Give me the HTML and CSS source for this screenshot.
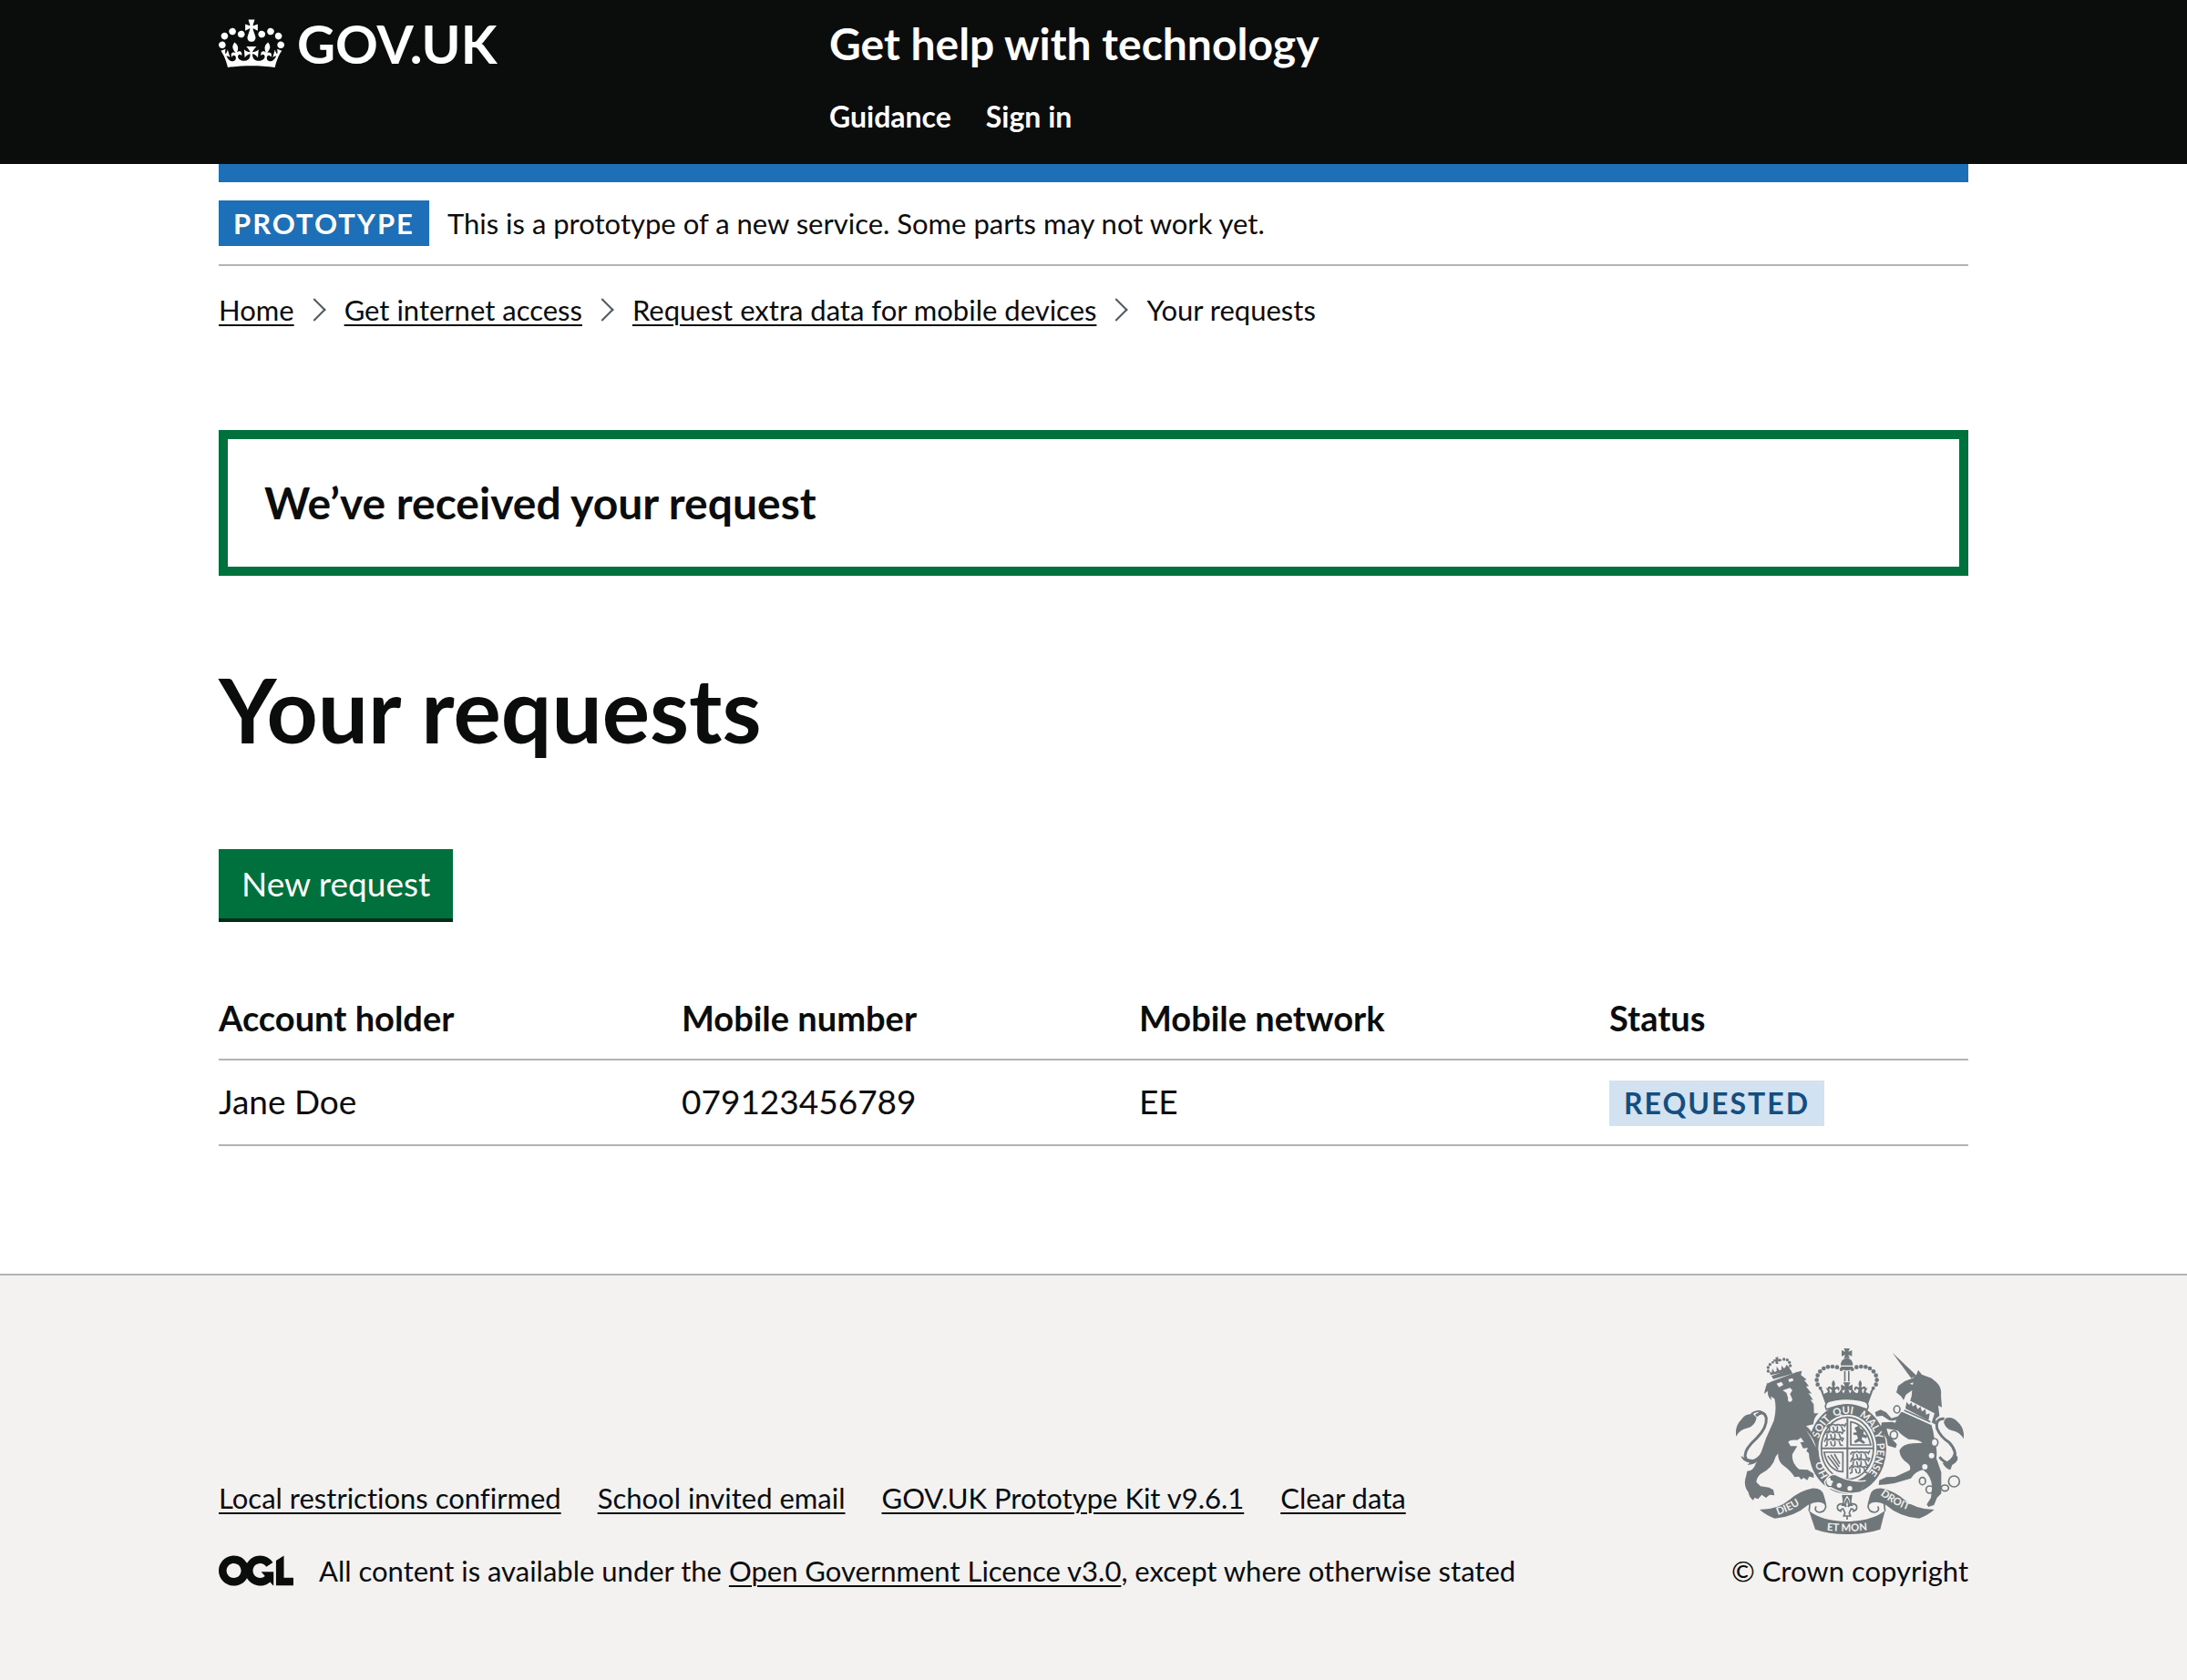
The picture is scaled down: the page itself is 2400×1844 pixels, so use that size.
FILE: index.html
```html
<!DOCTYPE html>
<html lang="en">
<head>
<meta charset="utf-8">
<title>Your requests - Get help with technology - GOV.UK</title>
<meta name="viewport" content="width=device-width, initial-scale=1">
<link rel="stylesheet" href="styles.css">
</head>
<body>
<header class="header">
  <div class="container header-grid">
    <a class="logo" href="#">
      <svg class="logo-crown" viewBox="0 0 132 97" aria-hidden="true"><path fill="currentColor" fill-rule="evenodd" d="M25 30.2c3.5 1.5 7.7-.2 9.1-3.7 1.5-3.6-.2-7.8-3.9-9.2-3.6-1.4-7.6.3-9.1 3.9-1.4 3.5.3 7.5 3.9 9zM9 39.5c3.6 1.5 7.8-.2 9.2-3.7 1.5-3.6-.2-7.8-3.9-9.1-3.6-1.5-7.6.2-9.1 3.8-1.4 3.5.3 7.5 3.8 9zM4.4 57.2c3.5 1.5 7.7-.2 9.1-3.8 1.5-3.6-.2-7.7-3.9-9.1-3.5-1.5-7.6.3-9.1 3.8-1.4 3.5.3 7.6 3.9 9.1zm38.3-21.4c3.5 1.5 7.7-.2 9.1-3.8 1.5-3.6-.2-7.7-3.9-9.1-3.6-1.5-7.6.3-9.1 3.8-1.3 3.6.4 7.7 3.9 9.1zm64.4-5.6c-3.6 1.5-7.8-.2-9.1-3.7-1.5-3.6.2-7.8 3.8-9.2 3.6-1.4 7.7.3 9.2 3.9 1.3 3.5-.4 7.5-3.9 9zm15.9 9.3c-3.6 1.5-7.7-.2-9.1-3.7-1.5-3.6.2-7.8 3.7-9.1 3.6-1.5 7.7.2 9.2 3.8 1.5 3.5-.3 7.5-3.8 9zm4.7 17.7c-3.6 1.5-7.8-.2-9.2-3.8-1.5-3.6.2-7.7 3.9-9.1 3.6-1.5 7.7.3 9.2 3.8 1.3 3.5-.4 7.6-3.9 9.1zM89.3 35.8c-3.6 1.5-7.8-.2-9.2-3.8-1.4-3.6.2-7.7 3.9-9.1 3.6-1.5 7.7.3 9.2 3.8 1.4 3.6-.3 7.7-3.9 9.1zM69.7 17.7l8.9 4.7V9.3l-8.9 2.8c-.2-.3-.5-.6-.9-.9L72.4 0H59.6l3.5 11.2c-.3.3-.6.5-.9.9l-8.8-2.8v13.1l8.8-4.7c.3.3.6.7.9.9l-5 15.4v.1c-.2.8-.4 1.6-.4 2.4 0 4.1 3.1 7.5 7 8.1h.2c.3 0 .7.1 1 .1.4 0 .7 0 1-.1h.2c4-.6 7.1-4.1 7.1-8.1 0-.8-.1-1.7-.4-2.4V34l-5.1-15.4c.4-.2.7-.6 1-.9zM66 92.8c16.9 0 32.8 1.1 47.1 3.2 4-16.9 8.9-26.7 14-33.5l-9.6-3.4c1 4.9 1.1 7.2 0 10.2-1.5-1.4-3-4.3-4.2-8.7L108.6 76c2.8-2 5-3.2 7.5-3.3-4.4 9.4-10 11.9-13.6 11.2-4.3-.8-6.3-4.6-5.6-7.9 1-4.7 5.7-5.9 8-.5 4.3-8.7-3-11.4-7.6-8.8 7.1-7.2 7.9-13.5 2.1-21.1-8 6.1-8.1 12.3-4.5 20.8-4.7-5.4-12.1-2.5-9.5 6.2 3.4-5.2 7.9-2 7.2 3.1-.6 4.3-6.4 7.8-13.5 7.2-10.3-.9-10.9-8-11.2-13.8 2.5-.5 7.1 1.8 11 7.3L80.2 60c-4.1 4.4-8 5.3-12.3 5.4 1.4-4.4 8-11.6 8-11.6H55.5s6.4 7.2 7.9 11.6c-4.2-.1-8-1-12.3-5.4l1.4 16.4c3.9-5.5 8.5-7.7 10.9-7.3-.3 5.8-.9 12.8-11.1 13.8-7.2.6-12.9-2.9-13.5-7.2-.7-5 3.8-8.3 7.1-3.1 2.7-8.7-4.6-11.6-9.4-6.2 3.7-8.5 3.6-14.7-4.6-20.8-5.8 7.6-5 13.9 2.2 21.1-4.7-2.6-11.9.1-7.7 8.8 2.3-5.5 7.1-4.2 8.1.5.7 3.3-1.3 7.1-5.7 7.9-3.5.7-9-1.8-13.5-11.2 2.5.1 4.7 1.3 7.5 3.3l-4.7-15.4c-1.2 4.4-2.7 7.2-4.3 8.7-1.1-3-.9-5.3 0-10.2l-9.5 3.4c5 6.9 9.9 16.7 14 33.5 14.8-2.1 30.8-3.2 47.7-3.2z"/></svg>
      <span>GOV.UK</span>
    </a>
    <div class="header-content">
      <a class="service-name" href="#">Get help with technology</a>
      <nav class="header-nav" aria-label="Top level navigation">
        <a href="#">Guidance</a>
        <a href="#">Sign in</a>
      </nav>
    </div>
  </div>
</header>

<div class="container">
  <div class="phase-banner">
    <strong class="tag tag-phase">Prototype</strong>
    <span>This is a prototype of a new service. Some parts may not work yet.</span>
  </div>
  <nav aria-label="Breadcrumb">
    <ol class="breadcrumbs">
      <li><a class="link" href="#">Home</a></li>
      <li><a class="link" href="#">Get internet access</a></li>
      <li><a class="link" href="#">Request extra data for mobile devices</a></li>
      <li aria-current="page">Your requests</li>
    </ol>
  </nav>

  <main class="main">
    <div class="alert" role="alert">
      <h2 class="alert-title">We’ve received your request</h2>
    </div>
    <h1 class="heading">Your requests</h1>
    <button class="button" type="button">New request</button>
    <table class="table">
      <thead>
        <tr>
          <th class="col-holder" scope="col">Account holder</th>
          <th class="col-number" scope="col">Mobile number</th>
          <th class="col-network" scope="col">Mobile network</th>
          <th scope="col">Status</th>
        </tr>
      </thead>
      <tbody>
        <tr>
          <td>Jane Doe</td>
          <td>079123456789</td>
          <td>EE</td>
          <td class="cell-status"><strong class="tag tag-blue">Requested</strong></td>
        </tr>
      </tbody>
    </table>
  </main>
</div>

<footer class="footer">
  <div class="container footer-row">
    <div>
      <ul class="footer-links">
        <li><a class="link" href="#">Local restrictions confirmed</a></li>
        <li><a class="link" href="#">School invited email</a></li>
        <li><a class="link" href="#">GOV.UK Prototype Kit v9.6.1</a></li>
        <li><a class="link" href="#">Clear data</a></li>
      </ul>
      <div class="licence">
        <svg class="licence-logo" viewBox="0 0 483.2 195.7" role="img" aria-label="Open Government Licence logo"><path fill="currentColor" d="M421.5 142.8V.1l-50.7 32.3v161.1h112.4v-50.7zm-122.3-9.6A47.12 47.12 0 0 1 221 97.8c0-26 21.1-47.1 47.1-47.1 16.7 0 31.4 8.7 39.7 21.8l42.7-27.2A97.63 97.63 0 0 0 268.1 0c-36.5 0-68.3 20.1-85.1 49.7A98 98 0 0 0 97.8 0C43.9 0 0 43.9 0 97.8s43.9 97.8 97.8 97.8c36.5 0 68.3-20.1 85.1-49.7a97.76 97.76 0 0 0 149.6 25.4l19.4 22.2h3v-87.8h-80l24.3 27.5zM97.8 145c-26 0-47.1-21.1-47.1-47.1s21.1-47.1 47.1-47.1 47.1 21.1 47.1 47.1S123.8 145 97.8 145"/></svg>
        <span>All content is available under the <a class="link" href="#">Open Government Licence v3.0</a>, except where otherwise stated</span>
      </div>
    </div>
    <a class="copyright" href="#">
      <svg class="crest" viewBox="72 60 750 612" aria-hidden="true">
        <defs>
          <path id="motto-hon" d="M376 480Q358 452 353 412"/>
          <path id="motto-ring" d="M341 389A98 114 0 0 1 537 389A98 114 0 0 1 439 503"/>
          <path id="dieu" d="M210 609Q268 590 320 547"/>
          <path id="droit" d="M547 542Q600 584 680 607"/>
          <path id="etmon" d="M346 656Q437 668 530 656"/>
          <g id="fleur"><path d="M0-18q-9 11-3 22l-3 3q-8-8-13 0-3 8 4 11-1-7 5-7l5 6-4 9h18l-4-9 5-6q6 0 5 7 7-3 4-11-5-8-13 0l-3-3q6-11-3-22z"/></g>
          <g id="leopard" fill="none" stroke-width="5" stroke-linecap="round"><path d="M0 6q4-10 12-4 8-8 16 0 8-6 16 0 8-6 14 2l4-8M8 6v12l-5 3M20 8l3 11M34 6v12l-5 3M48 6l4 12 6 1"/></g>
        </defs>
        <g class="ink">
          <!-- royal crown -->
          <path d="M427 60h20l-5 11 12-5v20l-12-5 5 11h-20l5-11-12 5V66l12 5z"/>
          <path d="M417 116q0-22 20-24 20 2 20 24zM417 120h40q-4 13-20 13t-20-13z"/>
          <path d="M428 134h5v35h-5zM441 134h5v35h-5z"/>
          <circle cx="419" cy="129" r="6"/><circle cx="405" cy="122" r="7"/><circle cx="390" cy="120" r="7"/><circle cx="375" cy="121" r="7"/><circle cx="361" cy="126" r="7"/><circle cx="349" cy="136" r="7"/><circle cx="341" cy="149" r="7"/><circle cx="338" cy="164" r="7"/><circle cx="341" cy="179" r="7"/><circle cx="350" cy="191" r="6"/>
          <circle cx="455" cy="129" r="6"/><circle cx="469" cy="122" r="7"/><circle cx="484" cy="120" r="7"/><circle cx="499" cy="121" r="7"/><circle cx="513" cy="126" r="7"/><circle cx="525" cy="136" r="7"/><circle cx="533" cy="149" r="7"/><circle cx="536" cy="164" r="7"/><circle cx="533" cy="179" r="7"/><circle cx="524" cy="191" r="6"/>
          <path d="M425 172h24l-7 13 14-6v22l-14-5 6 13h-22l6-13-14 5v-22l14 6z"/>
          <use href="#fleur" x="393" y="182"/><use href="#fleur" x="481" y="182"/>
          <path d="M346 186q13 8 15 24l14-6q-2-8-8-14 16 4 15 17h24q7-3 12-12l8 13h22l8-13q5 9 12 12h24q-1-13 15-17-6 6-8 14l14 6q2-16 15-24l-20 55q-72-24-142 0z"/>
          <path class="line" d="M376 234q-15 12-6 27 68-26 134 0 9-15-6-27"/>
          <!-- garter -->
          <path fill-rule="evenodd" d="M439 243a128 148 0 0 1 0 296 128 148 0 0 1 0-296zm0 35a96 112 0 0 0 0 224 96 112 0 0 0 0-224z"/>
          <ellipse class="line" cx="439" cy="389" rx="86" ry="102"/>
        </g>
        <text class="motto"><textPath href="#motto-hon">HO</textPath></text>
        <text class="motto"><textPath href="#motto-ring" startOffset="32">SOIT</textPath></text>
        <text class="motto"><textPath href="#motto-ring" startOffset="122">QUI</textPath></text>
        <text class="motto"><textPath href="#motto-ring" startOffset="206">MAL</textPath></text>
        <text class="motto"><textPath href="#motto-ring" startOffset="282">Y</textPath></text>
        <text class="motto"><textPath href="#motto-ring" startOffset="316">PENSE</textPath></text>
        <g class="ink">
          <!-- quartered shield -->
          <path d="M436 290h6v200h-6zM353 386h172v6H353z"/>
          <use class="ink-line" href="#leopard" x="372" y="312"/><use class="ink-line" href="#leopard" x="364" y="336"/><use class="ink-line" href="#leopard" x="364" y="360"/>
          <use class="ink-line" href="#leopard" x="450" y="402"/><use class="ink-line" href="#leopard" x="450" y="426"/><use class="ink-line" href="#leopard" x="446" y="450"/>
          <path class="line" d="M450 378V302q50 8 66 76zM362 402h62v64q-18 0-28-8-26-16-34-56z"/>
          <path d="M462 322l14-8 6 10 12 6-3 12 14 6-4 8-13-4-2 8 12 10-6 4-14-8-13 6-4-6 13-10-4-10-11-2-1-6 12-2z"/>
          <path class="line" d="M374 414l34 44M384 410l28 40M396 408l18 32"/>
          <!-- garter buckle -->
          <path class="paper-line" d="M366 500q20-34 42-18 40 20 86 16l-16 34q-46 12-94-14-14 4-18-18z"/>
          <path d="M366 500q20-34 42-18 44 22 92 16l-18 34q-52 12-98-16-14 4-18-16z"/>
        </g>
        <g class="paper">
          <circle cx="412" cy="511" r="8"/><circle cx="447" cy="521" r="8"/><path d="M372 490q14-10 12 4 14 2 4 10 2 12-10 8-12-6-6-22z"/>
        </g>
        <g class="ink">
          <!-- lion -->
          <path d="M189 151l63-21 6 13-63 18z"/>
          <circle cx="178" cy="135" r="5"/><circle cx="178" cy="123" r="5"/><circle cx="184" cy="113" r="5"/><circle cx="193" cy="106" r="4"/><circle cx="218" cy="99" r="4"/><circle cx="230" cy="96" r="5"/><circle cx="241" cy="98" r="5"/><circle cx="248" cy="106" r="5"/><circle cx="251" cy="117" r="5"/>
          <path d="M202 90l10-2-2 7 8-1-2 10-6-3 2 10h-9l-1-9-6 3-1-8 8 0zM186 148l-4-12 8 4 2-14 7 12 7-3 0-16 9 14 7-3 0-14 8 10 5-4 3-8 10 8 3 12z"/>
          <path d="M172 178l18-9 82-31 17-4-3 14 19 15-8 2 15 19-9 2 19 23-11-2 15 23-9-1 11 15 1 30 15 0q-16 14-17 36l-24 6q20 14 34 54l9 42-24 2-18-16 5-10-16 1-9-20 12-1-10-14-12 8q-24-2-30 6l8 14 22 0-16 26q-4 30 22 50l28 2 19 12 2 14-16-4-6 12-12-8-8 6-8-10-14 2q-10-18-34-36-22-16-20-42l-8 10q-10 38-50 58-12 10-14 26l14 14 28 4 14 8 4 18-16-2-12 10-14-10-12 14-12-4-4 8q-12-6-16-26-18-24-8-52l4-18q20 0 28-24 22-42 34-84l26-58q10-40 2-72l-12-8 2 12q-14-10-12-30l-12 10q4-24 12-40z"/>
          <path d="M72 350q-4-34 18-56 12-20 38-18l12 12q-4 26-28 34-28 6-40 28z"/>
          <path class="line tail" d="M138 282q26-22 34 8 2 32-32 66-38 34-38 58 6 26 34 14 20-12 30-34"/>
          <path class="line" d="M122 276q30-20 44 2"/>
          <path d="M88 414l16 8 34 6 12-8q-8 22-40 24l8-8q-22 0-30-22z"/>
          <!-- unicorn -->
          <path d="M587 74l80 76-18 8z"/>
          <path d="M600 205l6-21 22-16 26-10 12-10 6-17 12 15 32 12 9 8q26 18 22 50l3 38-12-6 4 34-12 10 2 20-102-52q22-28 22-62l-20 14-8 18-8-12z"/>
          <path d="M622 270l92 38q8 20 12 56 10 30 6 58l16 46 0 70-14 14-10 24-18 6-6-8 14-22 4-36q-4-38-30-56-26 6-40 28l-54 16-26 4-26 2 2-16 24-10 28-1 48-22q6-14-8-24-22-12-26-40 10-22 44-24l32-2q-12-12-46-12-34-18-44-44 0-22 20-45z"/>
          <path d="M618 280q-20 24-42 16l-22-14-20 2-4-14 18-8 18 8 18 20zM622 312l-10 20-44-8 6 22 28 30-4 12-26-8-4-22-20-34 4-20 34-2z"/>
          <path d="M822 358q4-36-22-58-16-16-38-10l-6 14q8 22 26 26 28 6 40 28z"/>
          <path class="line tail" d="M758 292q-30-2-24 32 12 28 40 46 30 32 14 62-18 18-46-14"/>
          <path d="M790 404l12 14q2 16-18 26l-6 16q-12 0-26-22 28-6 38-34z"/>
        </g>
        <g class="paper">
          <path d="M206 176l16-6 6 10-14 8zM244 162l14-4 4 8-14 6zM226 198l24-8 8 8-8 12 8 18q-2 10-10 8-8-2-4-12l-6-18zM644 176l12-4-2 8z"/>
          <path d="M284 308l26 30q20 22 26 50l-10-20q-12-28-42-60z"/>
          <path d="M632 226l94 48-12 38-92-42z"/>
          <ellipse cx="726" cy="370" rx="11" ry="13"/><ellipse cx="592" cy="345" rx="12" ry="13"/>
          <circle cx="716" cy="413" r="9"/><circle cx="694" cy="450" r="9"/>
        </g>
        <g class="ink">
          <path d="M630 258l4-22 8 10 8-8 4 14 10-8 6 16 10-8 4 16 12-8 2 18 12-4-4 24z"/>
          <path class="line" d="M626 264l86 38"/>
          <ellipse class="line" cx="602" cy="261" rx="10" ry="12"/><ellipse class="line" cx="592" cy="345" rx="12" ry="13"/><ellipse class="line" cx="726" cy="370" rx="11" ry="13"/><ellipse class="line" cx="686" cy="497" rx="10" ry="12"/><circle class="line" cx="710" cy="525" r="12"/><ellipse class="line" cx="760" cy="520" rx="12" ry="10"/><circle class="line" cx="790" cy="498" r="18"/>
          <!-- scroll -->
          <path d="M150 591q60 0 100-34 32-28 72-36 34-2 40 24l8 30q-24-18-60 0-46 40-110 45-28-10-50-29z"/>
          <path d="M725 591q-60 0-100-34-32-28-72-36-34-2-40 24l-8 30q24-18 60 0 46 40 110 45 28-10 50-29z"/>
          <path d="M312 594q40 34 125 36 85-2 126-36l-16 62q-50 16-110 16t-104-16z"/>
          <path class="line" d="M340 558q28 10 28 22-2 18-22 20-18-4-10-20M535 558q-28 10-28 22 2 18 22 20 18-4 10-20"/>
          <path class="line" d="M316 562l-3 34M559 562l4 34"/>
          <!-- plant badge -->
          <path d="M421 543h34l-3 22 6 14h-40l6-14z"/>
          <path class="paper-line" d="M438 552q-12 16 0 28 12-12 0-28z"/>
          <path class="line" d="M438 556q-10 14-3 26-16-18-28-4-4 14 10 18 0-8 8-8l6 14-4 10h22l-4-10 6-14q8 0 8 8 14-4 10-18-12-14-28 4 7-12-3-26zM438 612v12"/>
        </g>
        <text class="motto"><textPath href="#dieu">DIEU</textPath></text>
        <text class="motto"><textPath href="#droit">DROIT</textPath></text>
        <text class="motto"><textPath href="#etmon" startOffset="50%" text-anchor="middle">ET MON</textPath></text>
      </svg>
      <span>© Crown copyright</span>
    </a>
  </div>
</footer>
</body>
</html>
```
FILE: styles.css
```css
* {
  box-sizing: border-box;
}

html {
  background: #f3f2f1;
}

body {
  margin: 0;
  background: #fff;
  color: #0b0c0c;
  font-family: Lato, "Liberation Sans", sans-serif;
  font-size: 31px;
  font-variant-ligatures: none;
  line-height: 40px;
}

.container {
  max-width: 1920px;
  margin: 0 auto;
}

.link {
  color: inherit;
  text-decoration-thickness: 2px;
  text-underline-offset: 4px;
}

/* Header */

.header {
  background: #0b0c0c;
  color: #fff;
}

.header a {
  color: #fff;
  text-decoration: none;
}

.header-grid {
  display: grid;
  grid-template-columns: 670px 1fr;
  align-items: start;
  min-height: 180px;
  padding-top: 18px;
}

.logo {
  display: flex;
  align-items: center;
  gap: 14px;
  font-size: 58px;
  font-weight: 700;
  line-height: 60px;
}

.logo-crown {
  width: 72px;
  height: 54px;
}

.service-name {
  display: block;
  font-size: 48px;
  font-weight: 700;
  line-height: 60px;
}

.header-nav {
  display: flex;
  gap: 38px;
  margin-top: 30px;
  font-size: 32px;
  font-weight: 700;
}

/* Phase banner and breadcrumbs */

.phase-banner {
  display: flex;
  align-items: center;
  gap: 20px;
  padding: 20px 0;
  border-top: 20px solid #1d70b8;
  border-bottom: 2px solid #b1b4b6;
}

.tag {
  display: inline-block;
  padding: 5px 16px;
  letter-spacing: 2px;
  text-transform: uppercase;
}

.tag-phase {
  background: #1d70b8;
  color: #fff;
}

.tag-blue {
  background: #d2e2f1;
  color: #144e81;
}

.breadcrumbs {
  display: flex;
  flex-wrap: wrap;
  margin: 0;
  padding: 28px 0 0;
  list-style: none;
}

.breadcrumbs li {
  display: flex;
  align-items: center;
}

.breadcrumbs li + li::before {
  content: "";
  width: 16px;
  height: 16px;
  margin: 0 24px 0 13px;
  border: solid #505a5f;
  border-width: 2px 2px 0 0;
  transform: rotate(45deg);
}

/* Main content */

.main {
  padding: 112px 0 140px;
}

.alert {
  padding: 40px;
  border: 10px solid #00703c;
}

.alert-title {
  margin: 0;
  font-size: 48px;
  line-height: 60px;
}

.heading {
  margin: 96px 0 104px;
  font-size: 98px;
  line-height: 100px;
}

.button {
  display: block;
  padding: 18px 25px;
  border: 0;
  background: #00703c;
  box-shadow: 0 4px 0 #002d18;
  color: #fff;
  font: inherit;
  font-size: 37px;
  line-height: 40px;
}

.table {
  width: 100%;
  margin-top: 64px;
  border-collapse: collapse;
  table-layout: fixed;
  font-size: 37px;
  line-height: 50px;
  text-align: left;
}

.table th,
.table td {
  padding: 20px 0;
  border-bottom: 2px solid #b1b4b6;
  vertical-align: top;
}

.table th {
  font-size: 38px;
}

.col-holder {
  width: 508px;
}

.col-number {
  width: 502px;
}

.col-network {
  width: 516px;
}

.table .cell-status {
  padding-top: 22px;
  line-height: 0;
}

.table .tag {
  font-size: 32px;
  line-height: 40px;
}

/* Footer */

.footer {
  padding: 80px 0 100px;
  border-top: 2px solid #b1b4b6;
  background: #f3f2f1;
}

.footer-row {
  display: flex;
  align-items: flex-end;
  justify-content: space-between;
}

.footer-links {
  display: flex;
  flex-wrap: wrap;
  gap: 40px;
  margin: 0 0 40px;
  padding: 0;
  list-style: none;
}

.licence {
  display: flex;
  align-items: center;
  gap: 28px;
}

.licence-logo {
  width: 82px;
  height: 34px;
}

.copyright {
  display: flex;
  flex-direction: column;
  align-items: center;
  gap: 20px;
  color: inherit;
  text-decoration: none;
}

.crest {
  width: 250px;
  height: 204px;
}

.ink {
  fill: #6f777b;
}

.ink .line,
.ink-line {
  stroke: #6f777b;
  stroke-width: 5px;
}

.ink .line {
  fill: none;
}

.ink .tail {
  stroke-width: 9px;
}

.paper {
  fill: #f3f2f1;
}

.ink .paper-line {
  fill: none;
  stroke: #f3f2f1;
  stroke-width: 8px;
}

.motto {
  fill: #f3f2f1;
  font-size: 34px;
  font-weight: 700;
}
```
